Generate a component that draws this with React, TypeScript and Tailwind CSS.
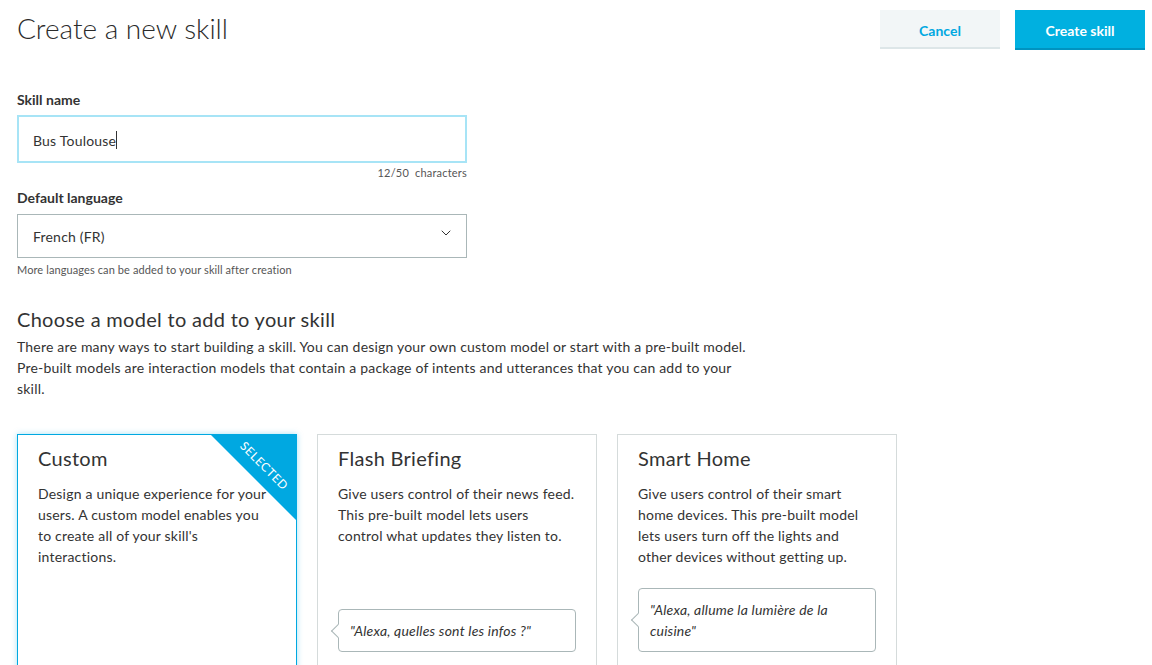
import { ChevronDown } from 'lucide-react';

type Model = {
    title: string;
    lines: string[];
    example?: string[];
    selected?: boolean;
};

const models: Model[] = [
    {
        title: 'Custom',
        lines: ['Design a unique experience for your', 'users. A custom model enables you', "to create all of your skill's", 'interactions.'],
        selected: true,
    },
    {
        title: 'Flash Briefing',
        lines: ['Give users control of their news feed.', 'This pre-built model lets users', 'control what updates they listen to.'],
        example: ['"Alexa, quelles sont les infos ?"'],
    },
    {
        title: 'Smart Home',
        lines: ['Give users control of their smart', 'home devices. This pre-built model', 'lets users turn off the lights and', 'other devices without getting up.'],
        example: ['"Alexa, allume la lumière de la', 'cuisine"'],
    },
];

function ModelCard({ model }: { model: Model }) {
    return (
        <div
            className={
                model.selected
                    ? 'relative flex flex-col w-[280px] h-[240px] shrink-0 bg-white border border-[#00a8e1] shadow-[0_0_6px_rgba(0,168,225,0.35)] px-[20px] pt-[10px] pb-[21px] overflow-hidden'
                    : 'relative flex flex-col w-[280px] h-[240px] shrink-0 bg-white border border-[#d5dbdb] px-[20px] pt-[10px] pb-[21px]'
            }
        >
            <h3 className="text-[20px] leading-[26px] tracking-[0.3px] text-[#333]">{model.title}</h3>
            <p className="mt-[12px] text-[14px] leading-[21px] tracking-[0.2px] text-[#333]">
                {model.lines.map(line => (
                    <span key={line} className="block whitespace-nowrap">
                        {line}
                    </span>
                ))}
            </p>
            {model.selected && (
                <div className="absolute top-0 right-0 w-[85px] h-[85px] bg-[#00a8e1] [clip-path:polygon(0_0,100%_0,100%_100%)]">
                    <span className="absolute left-[17px] top-[25px] w-[72px] text-center text-[12px] leading-none tracking-[0.6px] text-white rotate-45">
                        SELECTED
                    </span>
                </div>
            )}
            {model.example && (
                <div className="relative mt-auto border border-[#aab7b8] rounded-[4px] px-[11px] py-[10px] text-[14px] leading-[21px] tracking-[0.2px] italic text-[#333]">
                    <span className="absolute -left-[6px] top-1/2 -mt-[5px] w-[10px] h-[10px] rotate-45 bg-white border-l border-b border-[#aab7b8]" />
                    {model.example.map(line => (
                        <span key={line} className="block whitespace-nowrap">
                            {line}
                        </span>
                    ))}
                </div>
            )}
        </div>
    );
}

export default function App() {
    return (
        <div className="w-[1152px] h-[665px] overflow-hidden bg-white font-['Lato','Liberation_Sans',sans-serif] text-[#333]">
            <div className="flex items-start justify-between pl-[17px] pr-[7px] pt-[10px]">
                <h1 className="text-[28px] leading-[34px] font-light text-[#2b2b2b] mt-[1px]">Create a new skill</h1>
                <div className="flex gap-[15px]">
                    <button className="w-[120px] h-[39px] pt-[3px] bg-[#f2f6f7] border-b-2 border-[#dde6e8] text-[14px] font-bold text-[#00a8e1]">
                        Cancel
                    </button>
                    <button className="w-[130px] h-[40px] pt-[3px] bg-[#00b0e0] border-b-2 border-[#0093c0] text-[14px] font-bold text-white">
                        Create skill
                    </button>
                </div>
            </div>

            <div className="pl-[17px] mt-[41px] w-[467px]">
                <label className="block text-[14px] leading-[18px] font-bold text-[#333]">Skill name</label>
                <div className="mt-[6px] h-[48px] border-2 border-[#a7e4f6] flex items-center pl-[14px] pr-[14px] pt-[2px] text-[14px] tracking-[0.2px] text-[#333]">
                    Bus Toulouse<span className="w-px h-[18px] bg-[#333]" />
                </div>
                <div className="text-right text-[11px] leading-[16px] mt-[2px] text-[#555] tracking-[0.2px]">12/50&nbsp; characters</div>

                <label className="block mt-[8px] text-[14px] leading-[18px] font-bold text-[#333]">Default language</label>
                <div className="mt-[7px] h-[44px] border border-[#aab7b8] flex items-center justify-between pl-[15px] pr-[12px] text-[14px] tracking-[0.2px] text-[#333]">
                    <span>French (FR)</span>
                    <ChevronDown size={16} strokeWidth={1.5} className="text-[#333] -mt-[6px]" />
                </div>
                <p className="mt-[4px] text-[11px] leading-[16px] tracking-[0.1px] text-[#555]">More languages can be added to your skill after creation</p>
            </div>

            <div className="pl-[17px] mt-[28px]">
                <h2 className="text-[20px] leading-[26px] tracking-[0.3px] text-[#333]">Choose a model to add to your skill</h2>
                <p className="mt-[4px] w-[760px] text-[14px] leading-[21px] tracking-[0.2px] text-[#333]">
                    There are many ways to start building a skill. You can design your own custom model or start with a pre-built model.
                    <br />
                    Pre-built models are interaction models that contain a package of intents and utterances that you can add to your
                    <br />
                    skill.
                </p>
                <div className="flex gap-[20px] mt-[35px]">
                    {models.map(model => (
                        <ModelCard key={model.title} model={model} />
                    ))}
                </div>
            </div>
        </div>
    );
}
